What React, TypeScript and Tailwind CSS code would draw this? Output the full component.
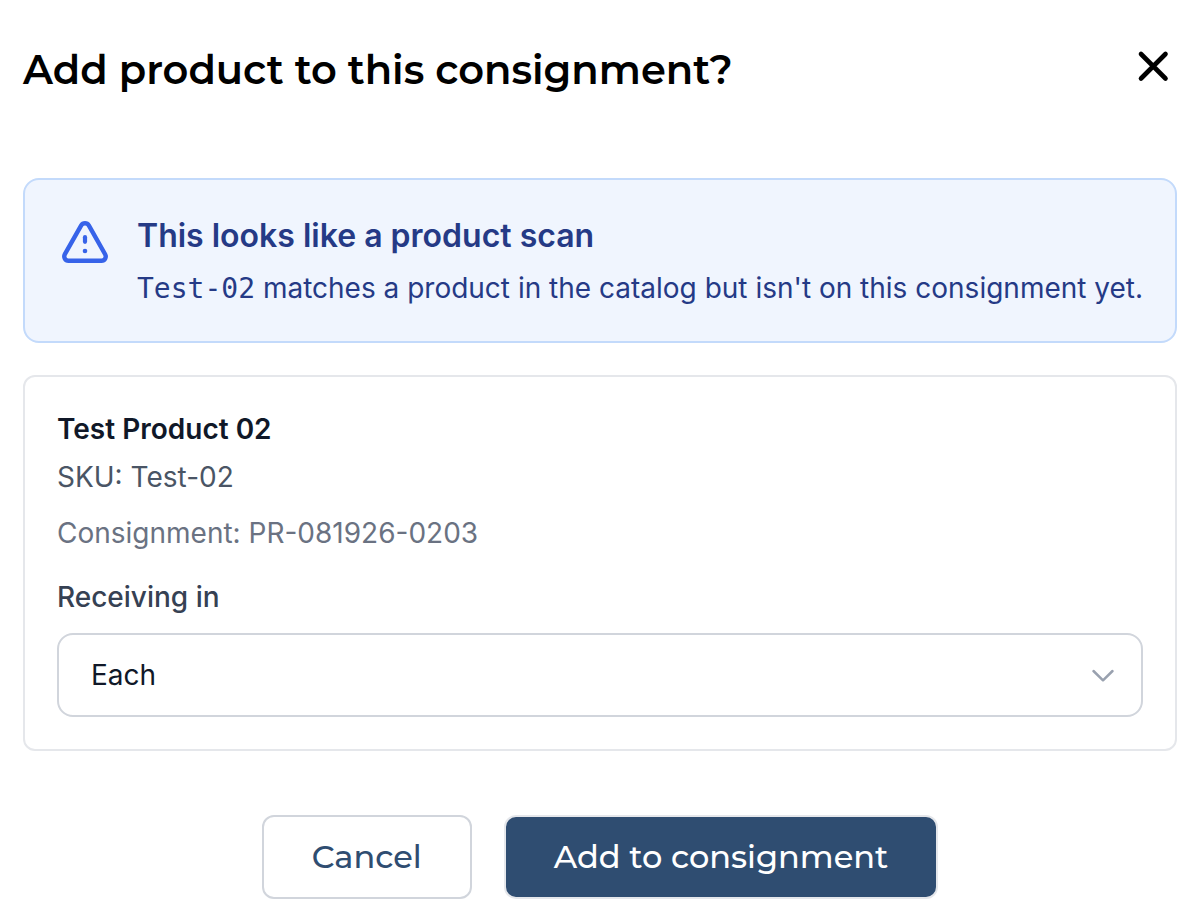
import { useState } from "react";

const units = ["Each", "Case", "Pallet"];

/* Heading and buttons use the brand font, with Inter as the backup */
const brandFont = "font-['Montserrat','Inter',sans-serif]";

function CloseIcon() {
  return (
    <svg viewBox="0 0 48 48" className="h-12 w-12" fill="none" aria-hidden="true">
      <path
        d="M12 12 36.500 36.500M36.500 12 12 36.500"
        stroke="currentColor"
        strokeWidth="4.6"
        strokeLinecap="round"
      />
    </svg>
  );
}

function WarningIcon() {
  return (
    <svg viewBox="0 0 48 48" className="h-12 w-12 shrink-0" fill="none" aria-hidden="true">
      <path
        d="M20.200 7.300 3.900 36.200C2.200 39.300 4.200 42.700 7.500 42.700h33c3.300 0 5.300-3.400 3.600-6.500L27.800 7.300c-1.700-2.800-5.900-2.800-7.600 0Z"
        stroke="currentColor"
        strokeWidth="4.400"
        strokeLinejoin="round"
      />
      <path d="M24 19.200v4.600" stroke="currentColor" strokeWidth="4.200" strokeLinecap="round" />
      <circle cx="24" cy="33" r="2.300" fill="currentColor" />
    </svg>
  );
}

function ScanNotice() {
  return (
    <div className="flex gap-7 rounded-2xl border-2 border-[#c3dafb] bg-[#f0f5fe] py-8 pr-6 pl-9 text-[#253a86]">
      <div className="mt-1.5 text-[#3763e9]">
        <WarningIcon />
      </div>
      <div>
        <h2 className="text-[32px] leading-12 font-semibold">This looks like a product scan</h2>
        <p className="mt-2 text-[28px] leading-10">
          <span className="font-['DejaVu_Sans_Mono',monospace]">Test-02</span> matches a product in
          the catalog but isn't on this consignment yet.
        </p>
      </div>
    </div>
  );
}

function ProductCard() {
  const [unit, setUnit] = useState("Each");

  return (
    <div className="mt-8 rounded-xl border-2 border-gray-200 p-8 text-[28px] leading-10">
      <p className="font-semibold text-gray-900">Test Product 02</p>
      <p className="mt-2 text-gray-600">SKU: Test-02</p>
      <p className="mt-4 text-gray-500">Consignment: PR-081926-0203</p>
      <label htmlFor="unit" className="mt-6 block font-medium text-gray-700">
        Receiving in
      </label>
      <div className="relative mt-4">
        <select
          id="unit"
          value={unit}
          onChange={(e) => setUnit(e.target.value)}
          className="block h-21 w-full appearance-none rounded-2xl border-2 border-gray-300 bg-white px-8 text-gray-900"
        >
          {units.map((name) => (
            <option key={name}>{name}</option>
          ))}
        </select>
        <svg
          viewBox="0 0 24 24"
          className="pointer-events-none absolute top-1/2 right-7 h-6 w-6 -translate-y-1/2 text-gray-400"
          fill="none"
          aria-hidden="true"
        >
          <path
            d="M2.500 8 12 17.300 21.500 8"
            stroke="currentColor"
            strokeWidth="2.500"
            strokeLinecap="round"
            strokeLinejoin="round"
          />
        </svg>
      </div>
    </div>
  );
}

export default function App() {
  return (
    <div
      role="dialog"
      aria-labelledby="dialog-title"
      className="bg-white pt-10 pr-[27px] pb-6 pl-[23px] font-['Inter',sans-serif]"
    >
      <header className="flex items-start justify-between">
        <h1 id="dialog-title" className={`${brandFont} text-[40px] leading-15 font-semibold text-black`}>
          Add product to this consignment?
        </h1>
        <button type="button" aria-label="Close" className="mt-0.5 text-black">
          <CloseIcon />
        </button>
      </header>

      <main className="mt-[78px]">
        <ScanNotice />
        <ProductCard />
      </main>

      <footer className={`${brandFont} mt-16 flex justify-center gap-8 text-[32px] leading-12 font-medium`}>
        <button
          type="button"
          className="rounded-xl border-2 border-gray-300 bg-white px-12 py-4 text-[#2f4d71]"
        >
          Cancel
        </button>
        <button
          type="button"
          className="rounded-xl border-2 border-gray-200 bg-[#2f4d71] px-12 py-4 text-white"
        >
          Add to consignment
        </button>
      </footer>
    </div>
  );
}
